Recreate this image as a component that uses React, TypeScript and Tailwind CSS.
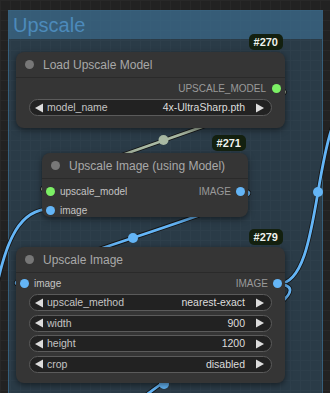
import React from 'react'

const font = { fontFamily: '"Liberation Sans", Arial, sans-serif' }

function Dot({ color }: { color: string }) {
  return <span className={`inline-block h-[9px] w-[9px] rounded-full ${color}`} />
}

function Badge({ id }: { id: string }) {
  return (
    <div className="absolute -top-[18px] right-[2px] rounded-[5px] bg-[#13200f] px-[5px] py-[1px] text-[11px] font-bold leading-[14px] text-[#eef2ee]">
      {id}
    </div>
  )
}

function Arrow({ dir }: { dir: 'l' | 'r' }) {
  return (
    <svg width="10" height="10" viewBox="0 0 10 10" className="shrink-0">
      {dir === 'l' ? <polygon points="9,0.5 9,9.5 1,5" fill="#dcdcdc" /> : <polygon points="1,0.5 1,9.5 9,5" fill="#dcdcdc" />}
    </svg>
  )
}

function Widget({ label, value }: { label: string; value: string }) {
  return (
    <div className="mx-[13px] flex h-[17px] items-center rounded-full border border-[#5b5b5b] bg-[#222222] pl-[4px] pr-[6px] text-[10.5px] leading-none">
      <Arrow dir="l" />
      <span className="ml-[3px] text-[#c4c4c4]">{label}</span>
      <span className="ml-auto mr-[10px] text-[#dddddd]">{value}</span>
      <Arrow dir="r" />
    </div>
  )
}

function Title({ text }: { text: string }) {
  return (
    <div className="flex h-[26px] items-center gap-[9px] border-b border-[#2a2a2a] pl-[9px] text-[12px] text-[#a8a8a8]">
      <span className="inline-block h-[9px] w-[9px] rounded-full bg-[#777777]" />
      {text}
    </div>
  )
}

function Link({ d, color }: { d: string; color: string }) {
  return (
    <>
      <path d={d} stroke="#151515" strokeWidth="4.5" />
      <path d={d} stroke={color} strokeWidth="2.8" />
    </>
  )
}

export default function App() {
  return (
    <div
      style={font}
      className="relative h-[393px] w-[330px] overflow-hidden bg-[#222222] bg-[linear-gradient(#282828_1px,transparent_1px),linear-gradient(90deg,#282828_1px,transparent_1px)] bg-[size:10px_10px]"
    >
      {/* group */}
      <div className="absolute left-[8px] top-[10px] h-[400px] w-[315px] border border-[#3f789e]/60 bg-[#3f789e]/30">
        <div className="flex h-[28px] items-center bg-[#3f789e]/55 pl-[4px] text-[20px] leading-none text-[#4c8abb]">Upscale</div>
      </div>

      {/* links */}
      <svg className="absolute inset-0" width="330" height="393">
        <g fill="none" strokeLinecap="round">
          <Link d="M277 90 C340 90 -13 191 50 191" color="#a9b9a3" />
          <Link d="M241 191 C305 191 -40 285 24 285" color="#64b5f6" />
          <Link d="M278 284 C327 284 309 100 358 100" color="#64b5f6" />
          <Link d="M278 284 C330 288 200 350 140 400" color="#64b5f6" />
          <Link d="M50 209 C20 209 6 240 -4 290" color="#64b5f6" />
        </g>
        <circle cx="163.5" cy="140" r="5" fill="#a9b9a3" />
        <circle cx="133" cy="238" r="5" fill="#64b5f6" />
        <circle cx="318" cy="192" r="5" fill="#64b5f6" />
        <circle cx="164" cy="384" r="5" fill="#64b5f6" />
      </svg>

      {/* Load Upscale Model */}
      <div className="absolute left-[16px] top-[52px] h-[76px] w-[269px] rounded-[8px] bg-[#353535] shadow-[0_2px_6px_rgba(0,0,0,0.5)]">
        <Badge id="#270" />
        <Title text="Load Upscale Model" />
        <div className="flex h-[21px] items-center justify-end gap-[6px] pr-[4px] text-[10px] text-[#9a9a9a]">
          UPSCALE_MODEL
          <Dot color="bg-[#7cf065]" />
        </div>
        <Widget label="model_name" value="4x-UltraSharp.pth" />
      </div>

      {/* Upscale Image (using Model) */}
      <div className="absolute left-[42px] top-[153px] h-[64px] w-[206px] rounded-[8px] bg-[#353535] shadow-[0_2px_6px_rgba(0,0,0,0.5)]">
        <Badge id="#271" />
        <Title text="Upscale Image (using Model)" />
        <div className="flex flex-col gap-[1px] pt-[3px] text-[10px]">
          <div className="flex h-[18px] items-center pl-[4px] pr-[3px]">
            <Dot color="bg-[#7cf065]" />
            <span className="ml-[5px] text-[#c4c4c4]">upscale_model</span>
            <span className="ml-auto mr-[5px] text-[#9a9a9a]">IMAGE</span>
            <Dot color="bg-[#64b5f6]" />
          </div>
          <div className="flex h-[18px] items-center pl-[4px]">
            <Dot color="bg-[#64b5f6]" />
            <span className="ml-[5px] text-[#c4c4c4]">image</span>
          </div>
        </div>
      </div>

      {/* Upscale Image */}
      <div className="absolute left-[16px] top-[247px] h-[136px] w-[269px] rounded-[8px] bg-[#353535] shadow-[0_2px_6px_rgba(0,0,0,0.5)]">
        <Badge id="#279" />
        <Title text="Upscale Image" />
        <div className="flex h-[21px] items-center pl-[4px] pr-[3px] text-[10px]">
          <Dot color="bg-[#64b5f6]" />
          <span className="ml-[5px] text-[#c4c4c4]">image</span>
          <span className="ml-auto mr-[5px] text-[#9a9a9a]">IMAGE</span>
          <Dot color="bg-[#64b5f6]" />
        </div>
        <div className="flex flex-col gap-[3.5px]">
          <Widget label="upscale_method" value="nearest-exact" />
          <Widget label="width" value="900" />
          <Widget label="height" value="1200" />
          <Widget label="crop" value="disabled" />
        </div>
      </div>
    </div>
  )
}
